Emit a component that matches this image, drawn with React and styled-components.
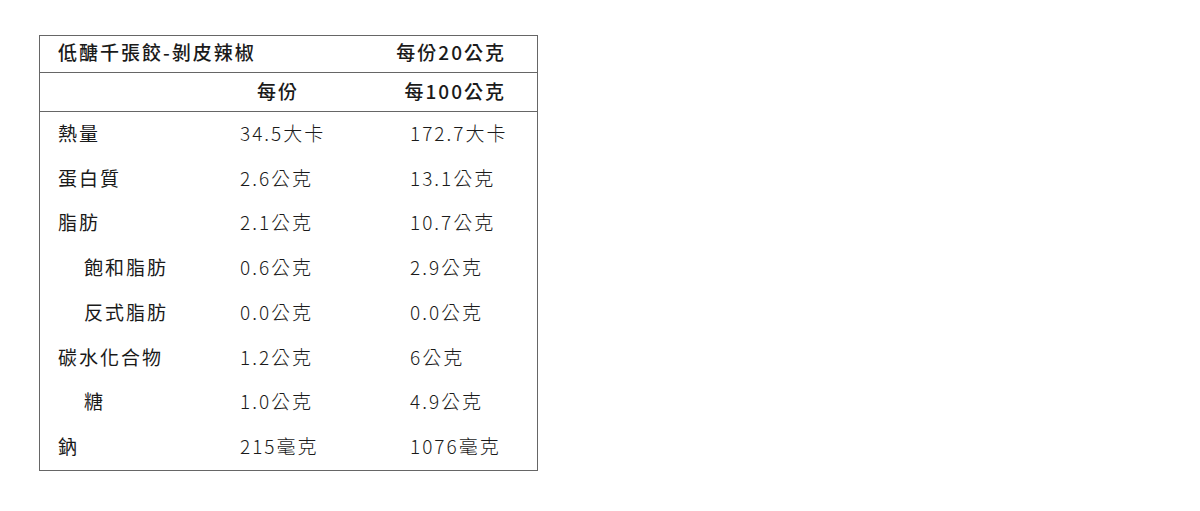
import React from 'react'
import styled, { createGlobalStyle } from 'styled-components'

const GlobalStyle = createGlobalStyle`
  html, body {
    margin: 0;
    padding: 0;
    background: #fff;
  }
  body {
    font-family: "Noto Sans CJK TC", "Noto Sans", sans-serif;
    color: #1a1a1a;
  }
`

const Page = styled.div`
  padding: 35px 0 0 39px;
`

const Table = styled.div`
  width: 497px;
  border: 1px solid #666;
  font-size: 19px;
  line-height: 1.2;
  letter-spacing: 2px;
  white-space: nowrap;
`

const TitleRow = styled.div`
  display: flex;
  justify-content: space-between;
  align-items: center;
  box-sizing: border-box;
  height: 37px;
  padding: 0 31px 3px 18px;
  border-bottom: 1px solid #666;
  font-weight: 500;
`

const HeadRow = styled.div`
  display: grid;
  grid-template-columns: 200px 170px 1fr;
  align-items: center;
  box-sizing: border-box;
  height: 39px;
  padding-bottom: 2px;
  border-bottom: 1px solid #666;
  font-weight: 500;
`

const HeadCell = styled.div`
  display: flex;
  justify-content: flex-end;
  min-width: 0;
  padding-right: ${p => p.$pad}px;
`

const Body = styled.div`
  display: flex;
  flex-direction: column;
`

const Row = styled.div`
  display: grid;
  grid-template-columns: 200px 170px 1fr;
  align-items: center;
  box-sizing: border-box;
  height: 44.75px;
  padding-bottom: 2px;
`

const Label = styled.div`
  font-weight: 400;
  padding-left: ${p => (p.$sub ? 44 : 18)}px;
`

const Value = styled.div`
  font-weight: 300;
`

const rows = [
  ['熱量', '34.5大卡', '172.7大卡'],
  ['蛋白質', '2.6公克', '13.1公克'],
  ['脂肪', '2.1公克', '10.7公克'],
  ['飽和脂肪', '0.6公克', '2.9公克', true],
  ['反式脂肪', '0.0公克', '0.0公克', true],
  ['碳水化合物', '1.2公克', '6公克'],
  ['糖', '1.0公克', '4.9公克', true],
  ['鈉', '215毫克', '1076毫克'],
]

const App = () => (
  <Page>
    <GlobalStyle />
    <Table>
      <TitleRow>
        <span>低醣千張餃-剝皮辣椒</span>
        <span>每份20公克</span>
      </TitleRow>
      <HeadRow>
        <div />
        <HeadCell $pad={111}>每份</HeadCell>
        <HeadCell $pad={31}>每100公克</HeadCell>
      </HeadRow>
      <Body>
        {rows.map(([name, perServing, per100, sub]) => (
          <Row key={name}>
            <Label $sub={sub}>{name}</Label>
            <Value>{perServing}</Value>
            <Value>{per100}</Value>
          </Row>
        ))}
      </Body>
    </Table>
  </Page>
)

export default App
